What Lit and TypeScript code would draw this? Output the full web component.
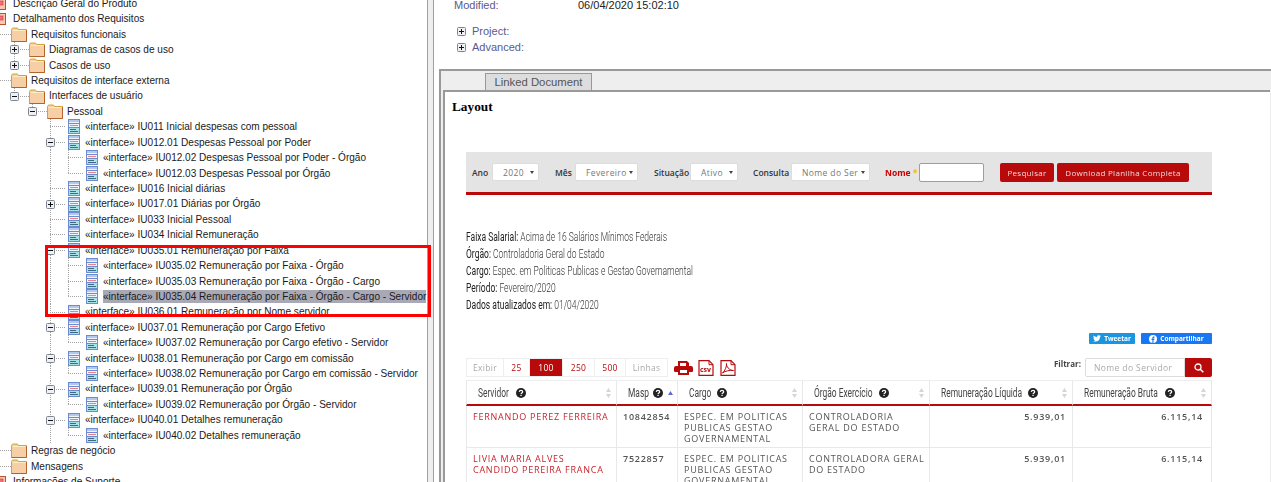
import { LitElement, html, css, svg } from 'lit';
import { customElement } from 'lit/decorators.js';

type Kind = 'page' | 'folder' | 'el';
interface Node {
  t: string;
  k: Kind;
  x?: '+' | '-';
  sel?: boolean;
  cont?: boolean; // the dotted line keeps going below the last child
  c?: Node[];
}

const el = (t: string, x?: '+' | '-', c?: Node[], extra: Partial<Node> = {}): Node => ({
  t: '«interface» ' + t,
  k: 'el',
  x,
  c,
  ...extra,
});

const tree: Node[] = [
  { t: 'Descrição Geral do Produto', k: 'page' },
  {
    t: 'Detalhamento dos Requisitos',
    k: 'page',
    c: [
      {
        t: 'Requisitos funcionais',
        k: 'folder',
        c: [
          { t: 'Diagramas de casos de uso', k: 'folder', x: '+' },
          { t: 'Casos de uso', k: 'folder', x: '+' },
        ],
      },
      {
        t: 'Requisitos de interface externa',
        k: 'folder',
        c: [
          {
            t: 'Interfaces de usuário',
            k: 'folder',
            x: '-',
            c: [
              {
                t: 'Pessoal',
                k: 'folder',
                x: '-',
                c: [
                  el('IU011 Inicial despesas com pessoal'),
                  el('IU012.01 Despesas Pessoal por Poder', '-', [
                    el('IU012.02 Despesas Pessoal por Poder - Órgão'),
                    el('IU012.03 Despesas Pessoal por Órgão'),
                  ]),
                  el('IU016 Inicial diárias'),
                  el('IU017.01 Diárias por Órgão', '+'),
                  el('IU033 Inicial Pessoal'),
                  el('IU034 Inicial Remuneração'),
                  el('IU035.01 Remuneração por Faixa', '-', [
                    el('IU035.02 Remuneração por Faixa - Órgão'),
                    el('IU035.03 Remuneração por Faixa - Órgão - Cargo'),
                    el('IU035.04 Remuneração por Faixa - Órgão - Cargo - Servidor', undefined, undefined, { sel: true }),
                  ]),
                  el('IU036.01 Remuneração por Nome servidor'),
                  el('IU037.01 Remuneração por Cargo Efetivo', '-', [
                    el('IU037.02 Remuneração por Cargo efetivo - Servidor'),
                  ]),
                  el('IU038.01 Remuneração por Cargo em comissão', '-', [
                    el('IU038.02 Remuneração por Cargo em comissão - Servidor'),
                  ]),
                  el('IU039.01 Remuneração por Órgão', '-', [
                    el('IU039.02 Remuneração por Órgão - Servidor'),
                  ]),
                  el('IU040.01 Detalhes remuneração', '-', [el('IU040.02 Detalhes remuneração')], { cont: true }),
                ],
              },
            ],
          },
        ],
      },
      { t: 'Regras de negócio', k: 'folder' },
      { t: 'Mensagens', k: 'folder' },
    ],
  },
  { t: 'Informações de Suporte', k: 'page' },
];

const folderIcon = svg`<svg class="ico" width="16" height="15" viewBox="0 0 16 15">
  <path d="M.5 14.5V2.500l1-1.500h5l1 1.500h8v12z" fill="#f6cfa6" stroke="#d0a43c"/>
  <path d="M.5 14.5h15V3" fill="none" stroke="#b5622c"/>
  <path d="M1.500 3.500h13" stroke="#fbeec0"/>
</svg>`;

const pageIcon = svg`<svg class="ico" width="14" height="14" viewBox="0 0 14 14">
  <rect x="1.500" y="1.500" width="11" height="11" fill="#f5c9ad" stroke="#b8552e"/>
  <rect x="4" y="4" width="6" height="4" fill="#ef6f7c" stroke="#d2323f" stroke-width=".6"/>
</svg>`;

const elIcon = svg`<svg class="ico el" width="12" height="15" viewBox="0 0 12 15">
  <rect x=".5" y=".5" width="11" height="14" fill="#eef3fc" stroke="#6c8ccf"/>
  <rect x="1" y="1" width="10" height="2" fill="#b4c8ee"/>
  <path d="M1 4.500h10" stroke="#6c8ccf"/>
  <path d="M2 6.500h8" stroke="#ea8088"/>
  <path d="M1 8.500h10" stroke="#6c8ccf"/>
  <rect x="1" y="9" width="10" height="5" fill="#a6e2e6"/>
  <path d="M2 10.500h6M2 12.500h8" stroke="#3e6a84"/>
</svg>`;

const expander = (x: string) => svg`<svg class="exp" width="9" height="9" viewBox="0 0 9 9">
  <rect x=".5" y=".5" width="8" height="8" rx="1" fill="#eef0f4" stroke="#7d8590"/>
  <path d=${x === '+' ? 'M2 4.500h5M4.500 2v5' : 'M2 4.500h5'} stroke="#111"/>
</svg>`;

const help = svg`<svg class="help" width="10" height="10" viewBox="0 0 10 10">
  <circle cx="5" cy="5" r="5" fill="#222"/>
  <path d="M3.300 3.900C3.400 2.800 4.200 2.400 5 2.400c1 0 1.700.6 1.700 1.400 0 1.200-1.600 1.200-1.600 2.300" fill="none" stroke="#fff" stroke-width="1.200"/>
  <rect x="4.400" y="6.800" width="1.300" height="1.200" fill="#fff"/>
</svg>`;

const sortBoth = svg`<svg class="sort" width="5" height="10" viewBox="0 0 5 10"><path d="M2.500 0 5 4H0zM2.500 10 0 6h5z" fill="#d5d5d5"/></svg>`;
const sortUp = svg`<svg class="sort up" width="5" height="4" viewBox="0 0 5 4"><path d="M2.500 0 5 4H0z" fill="#5a6cd8"/></svg>`;

// tw is the width the header text takes once it is squeezed
const columns = [
  { t: 'Servidor', tw: 32, sort: sortBoth },
  { t: 'Masp', tw: 19, sort: sortUp },
  { t: 'Cargo', tw: 22, sort: sortBoth },
  { t: 'Órgão Exercício', tw: 59, sort: sortBoth },
  { t: 'Remuneração Líquida', tw: 81, sort: sortBoth },
  { t: 'Remuneração Bruta', tw: 75, sort: sortBoth },
];

const rows = [
  ['FERNANDO PEREZ FERREIRA', '10842854', 'ESPEC. EM POLITICAS\nPUBLICAS GESTAO\nGOVERNAMENTAL', 'CONTROLADORIA\nGERAL DO ESTADO', '5.939,01', '6.115,14'],
  ['LIVIA MARIA ALVES\nCANDIDO PEREIRA FRANCA', '7522857', 'ESPEC. EM POLITICAS\nPUBLICAS GESTAO\nGOVERNAMENTAL', 'CONTROLADORA GERAL\nDO ESTADO', '5.939,01', '6.115,14'],
];

const info = [
  ['Faixa Salarial:', 'Acima de 16 Salários Mínimos Federais'],
  ['Órgão:', 'Controladoria Geral do Estado'],
  ['Cargo:', 'Espec. em Politicas Publicas e Gestao Governamental'],
  ['Período:', 'Fevereiro/2020'],
  ['Dados atualizados em:', '01/04/2020'],
];

const filters = [
  { l: 'Ano', lw: 20, v: '2020', w: 47, gap: 0 },
  { l: 'Mês', lw: 20, v: 'Fevereiro', w: 63, gap: 16 },
  { l: 'Situação', lw: 36, v: 'Ativo', w: 48, gap: 16 },
  { l: 'Consulta', lw: 38, v: 'Nome do Ser', w: 79, gap: 15 },
];

const pager = [
  { t: 'Exibir', w: 38, c: 'off' },
  { t: '25', w: 26, c: '' },
  { t: '100', w: 33, c: 'on' },
  { t: '250', w: 32, c: '' },
  { t: '500', w: 31, c: '' },
  { t: 'Linhas', w: 42, c: 'off' },
];

@customElement('app-root')
export class AppRoot extends LitElement {
  static styles = css`
    :host {
      display: block;
      width: 1271px;
      height: 482px;
      overflow: hidden;
      background: #fff;
      font-family: 'Liberation Sans', Arial, sans-serif;
    }
    .page {
      display: flex;
      height: 482px;
      position: relative;
    }

    /* project browser */
    .tree {
      width: 434px;
      flex: none;
      margin-top: -4.1px;
      margin-left: -7px;
      font-size: 10.05px;
      color: #1a1a1a;
      white-space: nowrap;
      overflow: hidden;
    }
    .row {
      display: flex;
      align-items: center;
      height: 15.43px;
      line-height: 15.43px;
    }
    .cell {
      flex: none;
      width: 18px;
      height: 100%;
      display: flex;
      align-items: center;
      --dots: repeating-linear-gradient(#a5a5a5 0 1px, transparent 1px 2px);
      --dotsh: repeating-linear-gradient(90deg, #a5a5a5 0 1px, transparent 1px 2px);
    }
    .cell.v {
      background: var(--dots) 3px 0 / 1px 100% no-repeat;
    }
    .cell.tee {
      background: var(--dots) 3px 0 / 1px 100% no-repeat, var(--dotsh) 3px 50% / 15px 1px no-repeat;
    }
    .cell.corner {
      background: var(--dots) 3px 0 / 1px 50% no-repeat, var(--dotsh) 3px 50% / 15px 1px no-repeat;
    }
    .exp {
      margin-left: -1px;
      flex: none;
    }
    .slot {
      flex: none;
      width: 20px;
      height: 100%;
      display: flex;
      align-items: center;
    }
    .ico {
      flex: none;
    }
    .ico.el {
      margin-left: 3px;
    }
    .label.sel {
      background: #a9a9b5;
      line-height: 13px;
    }
    .mark {
      position: absolute;
      left: 45px;
      top: 245px;
      width: 380px;
      height: 66px;
      border: 3px solid #f00;
      pointer-events: none;
    }

    .split {
      flex: none;
      width: 5px;
      border: solid #a0a0a0;
      border-width: 0 1px;
      background: #eee;
    }

    /* properties */
    .main {
      flex: 1;
      min-width: 0;
      padding-left: 5px;
      font-size: 11px;
    }
    .props {
      height: 69px;
      color: #5a5a8c;
      padding-left: 15px;
    }
    .prop-row {
      display: flex;
      height: 11px;
      line-height: 11px;
    }
    .prop-row span:first-child {
      width: 124px;
    }
    .prop-row .val {
      color: #222;
    }
    .more {
      display: flex;
      align-items: center;
      gap: 6px;
      height: 16px;
      padding-left: 3px;
    }
    .prop-row + .more {
      margin-top: 12px;
    }
    .more .exp {
      margin: 0;
    }

    .panel {
      height: 413px;
      box-sizing: border-box;
      border-top: 2px solid #999;
      border-left: 2px solid #999;
      background: #eee;
      display: flex;
      flex-direction: column;
    }
    .tabs {
      flex: none;
      height: 19px;
      box-sizing: border-box;
      padding: 2px 0 0 44px;
      display: flex;
    }
    .tab {
      width: 105px;
      height: 16px;
      border: 1px solid #999;
      border-bottom: 0;
      background: #ddd;
      color: #555;
      font-size: 11.3px;
      line-height: 16px;
      text-align: center;
    }
    .sheet {
      flex: 1;
      margin: 0 1px 0 2px;
      border-top: 2px solid #999;
      border-left: 2px solid #999;
      background: #fff;
      padding: 7px 0 0 7px;
    }
    .sheet h1 {
      margin: 0;
      height: 15px;
      font: bold 13.3px/15px 'Liberation Serif', serif;
      color: #000;
    }

    /* screenshot pasted in the linked document */
    .shot {
      width: 746px;
      margin: 38px 0 0 14px;
      filter: blur(0.35px);
      font-family: 'Open Sans', sans-serif;
      font-size: 8.5px;
      color: #555;
    }
    .bar {
      height: 43px;
      box-sizing: border-box;
      background: #e5e4e5;
      border-bottom: 3px solid #b80a0a;
      display: flex;
      align-items: center;
      padding-left: 6px;
    }
    .bar label {
      color: #333;
      font-weight: 600;
      white-space: nowrap;
    }
    .sel-box {
      height: 18px;
      background: #fff;
      border: 1px solid #ddd;
      border-radius: 2px;
      box-sizing: border-box;
      display: flex;
      align-items: center;
      justify-content: space-between;
      padding: 0 4px 0 10px;
      color: #777;
      letter-spacing: 0.4px;
      white-space: nowrap;
      overflow: hidden;
    }
    .sel-box i {
      flex: none;
      border: solid transparent;
      border-width: 3px 2px 0;
      border-top-color: #444;
    }
    .nome {
      width: 34px;
      margin-left: 15px;
      color: #c00;
      font-weight: 700;
      white-space: nowrap;
    }
    .nome b {
      color: #f0c020;
    }
    .nome-in {
      width: 65px;
      height: 19px;
      box-sizing: border-box;
      background: #fff;
      border: 1px solid #e08080;
      border-radius: 2px;
    }
    .btn {
      height: 19px;
      box-sizing: border-box;
      background: #b80a0a;
      color: #f0d8d8;
      border-radius: 2px;
      display: flex;
      align-items: center;
      justify-content: center;
      font-size: 8px;
      letter-spacing: 0.3px;
      white-space: nowrap;
    }
    .btn.search {
      width: 54px;
      margin-left: 16px;
    }
    .btn.dl {
      width: 132px;
      margin-left: 3px;
    }
    .info {
      margin-top: 33px;
      height: 84px;
      font-family: Roboto, sans-serif;
      font-weight: 300;
      font-size: 12.5px;
      line-height: 17px;
      color: #333;
      white-space: nowrap;
      transform: scaleX(0.68);
      transform-origin: left;
    }
    .info b {
      font-weight: 400;
      color: #222;
    }
    .social {
      margin-top: 21px;
      height: 11px;
      display: flex;
      justify-content: flex-end;
      gap: 6px;
      color: #fff;
      font-size: 6.5px;
      font-weight: 700;
      line-height: 11px;
    }
    .social span {
      display: flex;
      align-items: center;
      justify-content: center;
      gap: 3px;
      border-radius: 1px;
    }
    .tw {
      width: 46px;
      background: #1b95e0;
    }
    .fb {
      width: 71px;
      background: #1877f2;
    }
    .tools {
      margin-top: 14px;
      height: 19px;
      display: flex;
      align-items: center;
    }
    .pager {
      display: flex;
      height: 19px;
      border-radius: 2px;
      letter-spacing: 0.3px;
    }
    .pager span {
      display: flex;
      align-items: center;
      justify-content: center;
      border: 1px solid #eee;
      border-left-width: 0;
      color: #b80a0a;
      box-sizing: border-box;
    }
    .pager span:first-child {
      border-left-width: 1px;
    }
    .pager span.off {
      color: #aaa;
    }
    .pager span.on {
      background: #b80a0a;
      color: #fff;
    }
    .out {
      display: flex;
      align-items: center;
      margin-left: 6px;
      gap: 5px;
    }
    .filter {
      margin-left: auto;
      display: flex;
      align-items: center;
    }
    .filter b {
      color: #444;
      font-size: 8px;
      margin: -9px 4px 0 0;
    }
    .filter .in {
      width: 100px;
      height: 19px;
      box-sizing: border-box;
      border: 1px solid #ddd;
      border-radius: 2px 0 0 2px;
      color: #aaa;
      line-height: 17px;
      padding-left: 8px;
      letter-spacing: 0.4px;
    }
    .filter .go {
      width: 27px;
      height: 19px;
      background: #b80a0a;
      border-radius: 0 2px 2px 0;
      display: flex;
      align-items: center;
      justify-content: center;
    }
    .table {
      margin-top: 3px;
      display: grid;
      grid-template-columns: 150px 61px 125px 127px 143px 140px;
    }
    .th {
      height: 26px;
      box-sizing: border-box;
      border-top: 1px solid #eee;
      border-left: 1px solid #e8e8e8;
      border-bottom: 2px solid #b80a0a;
      display: flex;
      align-items: center;
      padding: 0 5px 0 11px;
      gap: 6px;
      font-family: Roboto, sans-serif;
      font-size: 12px;
      color: #444;
      white-space: nowrap;
    }
    .th:nth-child(6) {
      border-right: 1px solid #e8e8e8;
    }
    .th .txt {
      flex: none;
      display: inline-block;
      transform: scaleX(0.7);
      transform-origin: left;
    }
    .th svg {
      flex: none;
    }
    .th .sort {
      margin-left: auto;
    }
    .th .sort.up {
      margin-left: -1px;
    }
    .td {
      height: 42px;
      box-sizing: border-box;
      border-left: 1px solid #e8e8e8;
      border-bottom: 1px solid #e8e8e8;
      padding: 5px 0 0 6px;
      font-size: 9px;
      line-height: 11px;
      letter-spacing: 0.75px;
      color: #555;
      white-space: pre-line;
    }
    .td.nm {
      color: #c8242c;
    }
    .td.code {
      font-weight: 600;
    }
    .td.num {
      text-align: right;
      font-weight: 600;
      padding-right: 6px;
    }
    .td.end {
      border-right: 1px solid #e8e8e8;
      padding-right: 8px;
    }
  `;

  renderNode(n: Node, level: number, guides: boolean[], last: boolean): unknown {
    const kids = n.c || [];
    const hasNext = !last || !!n.cont;
    return html`
      <div class="row">
        ${guides.map((g) => html`<span class="cell ${g ? 'v' : ''}"></span>`)}
        ${level > 0
          ? html`<span class="cell ${hasNext ? 'tee' : 'corner'}">${n.x ? expander(n.x) : ''}</span>`
          : ''}
        <span class="slot">${n.k === 'folder' ? folderIcon : n.k === 'page' ? pageIcon : elIcon}</span>
        <span class="label ${n.sel ? 'sel' : ''}">${n.t}</span>
      </div>
      ${kids.map((k, i) =>
        this.renderNode(k, level + 1, level > 0 ? [...guides, hasNext] : guides, i === kids.length - 1)
      )}
    `;
  }

  renderBar() {
    return html`
      <div class="bar">
        ${filters.map(
          (f) => html`
            <label style="width:${f.lw}px;margin-left:${f.gap}px">${f.l}</label>
            <span class="sel-box" style="width:${f.w}px"><span>${f.v}</span><i></i></span>
          `
        )}
        <span class="nome">Nome <b>*</b></span><span class="nome-in"></span>
        <span class="btn search">Pesquisar</span>
        <span class="btn dl">Download Planilha Completa</span>
      </div>
    `;
  }

  renderTools() {
    return html`
      <div class="tools">
        <div class="pager">
          ${pager.map((p) => html`<span class=${p.c} style="width:${p.w}px">${p.t}</span>`)}
        </div>
        <div class="out">
          <svg width="19" height="16" viewBox="0 0 19 16">
            <path d="M4 6V1h9l2 2v3M4 12H1a1 1 0 0 1-1-1V8a2 2 0 0 1 2-2h15a2 2 0 0 1 2 2v3a1 1 0 0 1-1 1h-3v3H4zM6 10v3h7v-3z" fill="#b80a0a" fill-rule="evenodd"/>
            <rect x="6" y="3" width="6" height="3" fill="#fff"/>
          </svg>
          <svg width="17" height="16" viewBox="0 0 17 16">
            <path d="M1 .7h10l4 4v10.600H1z" fill="#fff" stroke="#b80a0a" stroke-width="1.200"/>
            <path d="M11 .7v4h4" fill="none" stroke="#b80a0a"/>
            <text x="2" y="12" font-size="7" font-weight="700" fill="#b80a0a">csv</text>
          </svg>
          <svg width="16" height="16" viewBox="0 0 16 16">
            <path d="M1 .7h10l4 4v10.600H1z" fill="#fff" stroke="#b80a0a" stroke-width="1.200"/>
            <path d="M11 .7v4h4M2.500 13C5 11 7 6 6.500 3.500 6 6 9 10.500 13.500 10.500 10 10 5 11 2.500 13z" fill="none" stroke="#b80a0a"/>
          </svg>
        </div>
        <div class="filter">
          <b>Filtrar:</b>
          <span class="in">Nome do Servidor</span>
          <span class="go">
            <svg width="10" height="10" viewBox="0 0 10 10">
              <circle cx="4" cy="4" r="3" fill="none" stroke="#fff" stroke-width="1.300"/>
              <path d="M6.300 6.300 9.300 9.300" stroke="#fff" stroke-width="1.500"/>
            </svg>
          </span>
        </div>
      </div>
    `;
  }

  render() {
    return html`
      <div class="page">
        <div class="tree">
          ${tree.map((n, i) => this.renderNode(n, 0, [], i === tree.length - 1))}
        </div>
        <div class="mark"></div>
        <div class="split"></div>
        <div class="main">
          <div class="props">
            <div class="prop-row"><span>Modified:</span><span class="val">06/04/2020 15:02:10</span></div>
            <div class="more">${expander('+')}<span>Project:</span></div>
            <div class="more">${expander('+')}<span>Advanced:</span></div>
          </div>
          <div class="panel">
            <div class="tabs"><div class="tab">Linked Document</div></div>
            <div class="sheet">
              <h1>Layout</h1>
              <div class="shot">
                ${this.renderBar()}
                <div class="info">
                  ${info.map((l) => html`<div><b>${l[0]}</b> ${l[1]}</div>`)}
                </div>
                <div class="social">
                  <span class="tw">
                    <svg width="8" height="7" viewBox="0 0 8 7"><path d="M0 6c3 1.500 7 0 7-4l1-1-1 .2.800-.9-1 .4C6 0 4 .2 4 2 2.500 2 1.200 1.200.5.500.2 1.500.5 2.300 1 2.800l-.6-.1c0 .8.500 1.400 1.200 1.600h-.7c.2.600.8 1 1.500 1C2 5.800 1 6 0 6z" fill="#fff"/></svg>
                    Tweetar
                  </span>
                  <span class="fb">
                    <svg width="8" height="8" viewBox="0 0 8 8"><circle cx="4" cy="4" r="4" fill="#fff"/><path d="M3.400 8V5H2.500V3.800h.9V3c0-.9.500-1.400 1.400-1.400h.7v1.100h-.5c-.4 0-.5.200-.5.500v.6h1l-.2 1.200h-.8v3z" fill="#1877f2"/></svg>
                    Compartilhar
                  </span>
                </div>
                ${this.renderTools()}
                <div class="table">
                  ${columns.map(
                    (c) => html`<div class="th"><span class="txt" style="width:${c.tw}px">${c.t}</span>${help}${c.sort}</div>`
                  )}
                  ${rows.map((r) =>
                    r.map(
                      (v, i) => html`<div class="td ${i === 0 ? 'nm' : ''} ${i === 1 ? 'code' : ''} ${i > 3 ? 'num' : ''} ${i === 5 ? 'end' : ''}">${v}</div>`
                    )
                  )}
                </div>
              </div>
            </div>
          </div>
        </div>
      </div>
    `;
  }
}
